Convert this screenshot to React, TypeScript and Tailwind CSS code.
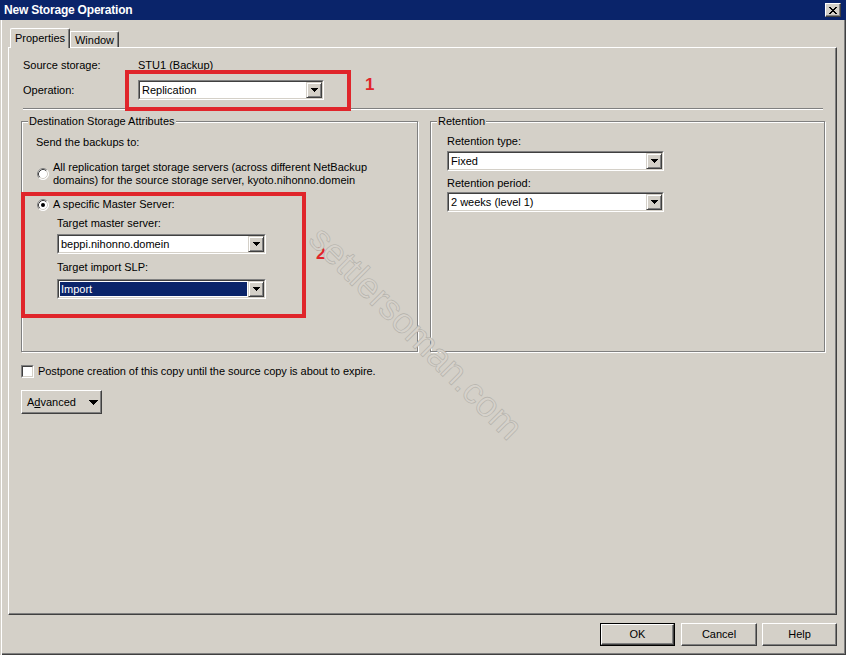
import React from "react";

function Arrow() {
  return (
    <svg width="7" height="4" viewBox="0 0 7 4" shapeRendering="crispEdges">
      <path d="M0 0h7v1h-1v1h-1v1h-1v1h-1v-1h-1v-1h-1v-1h-1z" fill="#000" />
    </svg>
  );
}

function BigArrow() {
  return (
    <svg width="9" height="5" viewBox="0 0 9 5" shapeRendering="crispEdges">
      <path d="M0 0h9v1h-1v1h-1v1h-1v1h-1v1h-1v-1h-1v-1h-1v-1h-1v-1h-1z" fill="#000" />
    </svg>
  );
}

function Combo({ value, className, selected }: { value: string; className: string; selected?: boolean }) {
  return (
    <div className={`flex h-[20px] border border-t-[#808080] border-l-[#808080] border-b-white border-r-white ${className}`}>
      <div className="flex flex-1 border border-t-[#404040] border-l-[#404040] border-b-[#d4d0c8] border-r-[#d4d0c8] bg-white">
        <div className="flex flex-1 items-stretch p-[1px]">
          <div
            className={`flex flex-1 items-center pl-[1px] leading-[13px] ${
              selected ? "bg-[#0a246a] text-white" : "text-black"
            }`}
          >
            {value}
          </div>
        </div>
        <div className="flex w-[16px] items-center justify-center border border-t-[#d4d0c8] border-l-[#d4d0c8] border-b-[#404040] border-r-[#404040] bg-[#d4d0c8] shadow-[inset_1px_1px_0_#fff,inset_-1px_-1px_0_#808080]">
          <Arrow />
        </div>
      </div>
    </div>
  );
}

function Radio({ checked }: { checked?: boolean }) {
  return (
    <svg width="12" height="12" viewBox="0 0 12 12" className="shrink-0">
      <circle cx="6" cy="6" r="5.5" fill="#fff" />
      <path d="M2.11 9.89 A5.5 5.5 0 0 1 9.89 2.11" fill="none" stroke="#808080" strokeWidth="1" />
      <path d="M9.89 2.11 A5.5 5.5 0 0 1 2.11 9.89" fill="none" stroke="#ffffff" strokeWidth="1" />
      <path d="M2.82 9.18 A4.5 4.5 0 0 1 9.18 2.82" fill="none" stroke="#404040" strokeWidth="1" />
      <path d="M9.18 2.82 A4.5 4.5 0 0 1 2.82 9.18" fill="none" stroke="#d4d0c8" strokeWidth="1" />
      {checked && <circle cx="6" cy="6" r="2" fill="#000" />}
    </svg>
  );
}

function Btn({ children, className, def }: { children: React.ReactNode; className: string; def?: boolean }) {
  const inner = (
    <div className="flex h-full w-full items-center justify-center border border-t-white border-l-white border-b-[#404040] border-r-[#404040] shadow-[inset_-1px_-1px_0_#808080]">
      {children}
    </div>
  );
  return def ? <div className={`border border-black ${className}`}>{inner}</div> : <div className={className}>{inner}</div>;
}

function Group({ label, className, children }: { label: string; className: string; children: React.ReactNode }) {
  return (
    <div className={`relative border border-[#808080] shadow-[inset_1px_1px_0_#fff,1px_1px_0_#fff] ${className}`}>
      <span className="absolute -top-[7px] left-[6px] bg-[#d4d0c8] px-[1px] leading-[13px]">{label}</span>
      {children}
    </div>
  );
}

export default function App() {
  return (
    <div className="relative flex h-[655px] w-[846px] flex-col overflow-hidden bg-[#d4d0c8] font-['Liberation_Sans',Arial,sans-serif] text-[11px] text-black shadow-[inset_1px_0_0_#d4d0c8,inset_2px_0_0_#fff,inset_-1px_-1px_0_#404040,inset_-2px_-2px_0_#808080]">
      {/* Title bar */}
      <div className="flex h-[20px] shrink-0 items-center justify-between bg-[#0a246a] pl-[4px] pr-[5px]">
        <span className="text-[12px] font-bold leading-[14px] tracking-[-0.2px] text-white">New Storage Operation</span>
        <div className="flex h-[14px] w-[16px] items-center justify-center border border-t-white border-l-white border-b-[#404040] border-r-[#404040] bg-[#d4d0c8] shadow-[inset_-1px_-1px_0_#808080]">
          <svg width="8" height="7" viewBox="0 0 8 7" shapeRendering="crispEdges">
            <path
              d="M0 0h2v1h1v1h2v-1h1v-1h2v1h-1v1h-1v1h-1v1h1v1h1v1h1v1h-2v-1h-1v-1h-2v1h-1v1h-2v-1h1v-1h1v-1h1v-1h-1v-1h-1v-1h-1z"
              fill="#000"
            />
          </svg>
        </div>
      </div>

      {/* Tabs */}
      <div className="relative z-10 -mb-px ml-[10px] mt-[8px] flex h-[20px] items-start">
        <div className="flex h-[20px] w-[60px] items-start justify-center rounded-tl-[2px] rounded-tr-[2px] border-l border-t border-r border-l-white border-t-white border-r-[#404040] bg-[#d4d0c8] pt-[3px] leading-[13px] shadow-[inset_-1px_0_0_#808080]">
          Properties
        </div>
        <div className="mt-[3px] flex h-[16px] w-[49px] items-start justify-center rounded-tr-[2px] border-l border-t border-r border-l-white border-t-white border-r-[#404040] pt-[2px] leading-[13px] shadow-[inset_-1px_0_0_#808080]">
          Window
        </div>
      </div>

      {/* Tab panel */}
      <div className="ml-[8px] flex h-[568px] w-[829px] flex-col border border-t-white border-l-white border-b-[#404040] border-r-[#404040] shadow-[inset_-1px_-1px_0_#808080]">
        <div className="ml-[14px] mt-[10px] flex h-[14px] items-center leading-[13px]">
          <span className="w-[115px]">Source storage:</span>
          <span>STU1 (Backup)</span>
        </div>
        <div className="ml-[14px] mt-[8px] flex h-[20px] items-center leading-[13px]">
          <span className="w-[115px]">Operation:</span>
          <div className="relative">
            <Combo value="Replication" className="w-[186px]" />
            <div className="pointer-events-none absolute -left-[13px] -top-[10px] h-[41px] w-[226px] border-[4px] border-[#e0252b]" />
            <span className="absolute left-[227px] -top-[5px] text-[17px] font-bold leading-[20px] text-[#e0252b]">1</span>
          </div>
        </div>
        <div className="ml-[14px] mt-[8px] h-[2px] w-[800px] border-t border-b border-t-[#808080] border-b-white" />

        <div className="ml-[12px] mt-[11px] flex gap-[12px]">
          <Group label="Destination Storage Attributes" className="h-[231px] w-[397px]">
            <div className="relative flex flex-col">
              <div className="ml-[14px] mt-[14px] h-[13px] leading-[13px]">Send the backups to:</div>
              <div className="ml-[15px] mt-[12px] flex items-center">
                <Radio />
                <div className="ml-[4px] leading-[13px]">
                  All replication target storage servers (across different NetBackup
                  <br />
                  domains) for the source storage server, kyoto.nihonno.domein
                </div>
              </div>
              <div className="ml-[15px] mt-[11px] flex h-[13px] items-center">
                <Radio checked />
                <span className="ml-[4px] leading-[13px]">A specific Master Server:</span>
              </div>
              <div className="ml-[35px] mt-[6px] h-[13px] leading-[13px]">Target master server:</div>
              <Combo value="beppi.nihonno.domein" className="ml-[35px] mt-[4px] w-[209px]" />
              <div className="ml-[35px] mt-[7px] h-[13px] leading-[13px]">Target import SLP:</div>
              <Combo value="Import" selected className="ml-[35px] mt-[5px] w-[209px]" />
            </div>
            <div className="pointer-events-none absolute -left-[1px] top-[70px] h-[126px] w-[285px] border-[4px] border-[#e0252b]" />
            <span className="absolute left-[294px] top-[122px] text-[17px] font-bold leading-[20px] text-[#e0252b]">2</span>
          </Group>

          <Group label="Retention" className="h-[231px] w-[395px]">
            <div className="flex flex-col">
              <div className="ml-[16px] mt-[13px] h-[13px] leading-[13px]">Retention type:</div>
              <Combo value="Fixed" className="ml-[16px] mt-[3px] w-[217px]" />
              <div className="ml-[16px] mt-[6px] h-[13px] leading-[13px]">Retention period:</div>
              <Combo value="2 weeks (level 1)" className="ml-[16px] mt-[2px] w-[217px]" />
            </div>
          </Group>
        </div>

        <div className="ml-[12px] mt-[13px] flex h-[13px] items-center">
          <div className="h-[13px] w-[13px] border border-t-[#808080] border-l-[#808080] border-b-white border-r-white">
            <div className="h-full w-full border border-t-[#404040] border-l-[#404040] border-b-[#d4d0c8] border-r-[#d4d0c8] bg-white" />
          </div>
          <span className="ml-[4px] leading-[13px] tracking-[-0.05px]">
            Postpone creation of this copy until the source copy is about to expire.
          </span>
        </div>

        <div className="ml-[12px] mt-[12px] h-[24px] w-[81px]">
          <div className="flex h-full w-full items-center border border-t-white border-l-white border-b-[#404040] border-r-[#404040] pl-[5px] shadow-[inset_-1px_-1px_0_#808080]">
            <span className="leading-[13px]">
              A<span className="underline">d</span>vanced
            </span>
            <span className="ml-[13px] flex items-center">
              <BigArrow />
            </span>
          </div>
        </div>
      </div>

      {/* Buttons */}
      <div className="mt-[8px] flex justify-end pr-[9px]">
        <Btn def className="h-[23px] w-[75px]">OK</Btn>
        <Btn className="ml-[6px] h-[23px] w-[76px]">Cancel</Btn>
        <Btn className="ml-[5px] h-[23px] w-[75px]">Help</Btn>
      </div>

      {/* Watermark */}
      <div className="pointer-events-none absolute left-[416px] top-[333px] -translate-x-1/2 -translate-y-1/2 rotate-[45deg] whitespace-nowrap text-[36px] leading-[40px] text-[#d6d2cb] [-webkit-text-stroke:0.6px_#b3b0aa]">
        settlersoman.com
      </div>
    </div>
  );
}
